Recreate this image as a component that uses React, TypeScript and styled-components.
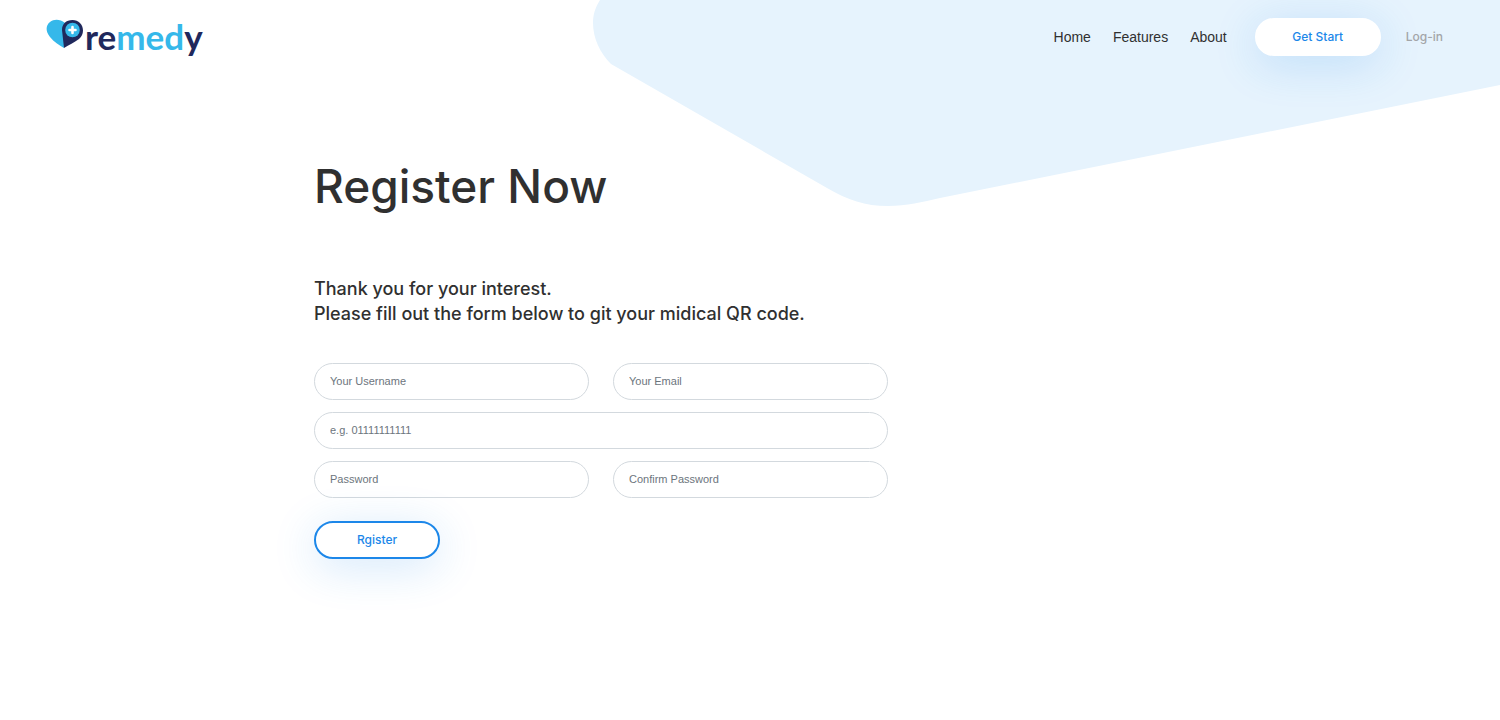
import React from "react";
import styled, { createGlobalStyle } from "styled-components";

const GlobalStyle = createGlobalStyle`
  *, *::before, *::after { box-sizing: border-box; }
  body {
    margin: 0;
    background: #fff;
    color: #303030;
    font-family: Inter, "Liberation Sans", sans-serif;
  }
`;

const Page = styled.div`
  position: relative;
  min-height: 100vh;
  overflow: hidden;
`;

const Backdrop = styled.svg`
  position: absolute;
  top: 0;
  right: 0;
  z-index: -1;
  width: 908px;
  height: 208px;
`;

const Header = styled.header`
  display: flex;
  align-items: center;
  justify-content: space-between;
  height: 74px;
  padding: 0 57px 0 46px;
`;

const Brand = styled.a`
  display: flex;
  align-items: flex-start;
  height: 36px;
  gap: 1px;
  text-decoration: none;
`;

const BrandMark = styled.svg`
  width: 38px;
  height: 30px;
`;

const BrandName = styled.span`
  color: #20285c;
  font: 700 35px/34px Lato, sans-serif;
`;

const BrandAccent = styled.span`
  color: #35b8ea;
`;

const Nav = styled.nav`
  display: flex;
  align-items: center;
`;

const NavLinks = styled.div`
  display: flex;
  gap: 22px;
  margin-right: 28px;
`;

const NavLink = styled.a`
  color: #303030;
  font: 400 14px/20px "Liberation Sans", sans-serif;
  text-decoration: none;
`;

const LoginLink = styled.a`
  margin-left: 25px;
  color: #a3a5a8;
  font: 500 12px/20px Inter, sans-serif;
  text-decoration: none;
`;

const PillButton = styled.button<{ $outlined?: boolean }>`
  width: 126px;
  height: 38px;
  padding: 0;
  border: 2px solid ${(p) => (p.$outlined ? "#1c87e9" : "#fff")};
  border-radius: 19px;
  background: #fff;
  box-shadow: 0 8px 45px rgba(28, 135, 233, 0.2);
  color: #1c87e9;
  font: 500 12px/20px Inter, sans-serif;
  cursor: pointer;
`;

const Main = styled.main`
  max-width: 912px;
  padding: 84px 24px 40px 314px;

  @media (max-width: 900px) {
    padding-left: 24px;
  }
`;

const Title = styled.h1`
  margin: 0;
  font-size: 46px;
  font-weight: 500;
  line-height: 56px;
`;

const Intro = styled.p`
  margin: 62px 0 37px;
  font-size: 18px;
  font-weight: 500;
  line-height: 25px;
`;

const Form = styled.form`
  display: grid;
  grid-template-columns: 1fr 1fr;
  gap: 12px 24px;
`;

const Field = styled.label<{ $wide?: boolean }>`
  grid-column: ${(p) => (p.$wide ? "1 / -1" : "auto")};
`;

const Input = styled.input`
  display: block;
  width: 100%;
  height: 37px;
  padding: 0 15px 2px;
  border: 1px solid #d3d9de;
  border-radius: 19px;
  background: #fff;
  color: #303030;
  font: 400 11px/16px "Liberation Sans", sans-serif;

  &::placeholder {
    color: #6c757d;
    opacity: 1;
  }
`;

const Actions = styled.div`
  grid-column: 1 / -1;
  margin-top: 11px;
`;

const links = ["Home", "Features", "About"];

const fields = [
  { name: "username", type: "text", hint: "Your Username" },
  { name: "email", type: "email", hint: "Your Email" },
  { name: "phone", type: "tel", hint: "e.g. 01111111111", label: "Phone", wide: true },
  { name: "password", type: "password", hint: "Password" },
  { name: "confirm", type: "password", hint: "Confirm Password" },
];

export default function App() {
  return (
    <Page>
      <GlobalStyle />
      <Backdrop viewBox="0 0 908 208" aria-hidden="true">
        <path
          d="M8 0C3 8 1 15 1 23C1 38 8 53 19 64L235 188C256 200 273 206 296 206C315 206 330 202 348 198L908 85V0Z"
          fill="#e6f3fd"
        />
      </Backdrop>
      <Header>
        <Brand href="#" aria-label="remedy">
          <BrandMark viewBox="0 0 38 30" aria-hidden="true">
            <path
              d="M18 29C13 26 8 23 4 18C-1 12 0 6 4 3C8 0 14 0 19 4Z"
              fill="#35b8ea"
            />
            <path
              d="M18 29L16 11C16 5 20 1 26.500 1C32.500 1 37 5.500 37 11.500C37 15 35.500 18 33 20C28 23.500 23 26 18 29Z"
              fill="#20285c"
            />
            <circle cx="26.500" cy="11" r="7.300" fill="#35b8ea" />
            <path d="M26.500 8V14M23.500 11H29.500" stroke="#fff" strokeWidth="2.600" strokeLinecap="round" />
          </BrandMark>
          <BrandName>
            re<BrandAccent>med</BrandAccent>y
          </BrandName>
        </Brand>
        <Nav>
          <NavLinks>
            {links.map((text) => (
              <NavLink key={text} href="#">
                {text}
              </NavLink>
            ))}
          </NavLinks>
          <PillButton type="button">Get Start</PillButton>
          <LoginLink href="#">Log-in</LoginLink>
        </Nav>
      </Header>
      <Main>
        <Title>Register Now</Title>
        <Intro>
          Thank you for your interest.
          <br />
          Please fill out the form below to git your midical QR code.
        </Intro>
        <Form onSubmit={(e) => e.preventDefault()}>
          {fields.map((f) => (
            <Field key={f.name} $wide={f.wide} htmlFor={f.name}>
              <Input
                id={f.name}
                name={f.name}
                type={f.type}
                placeholder={f.hint}
                aria-label={f.label ?? f.hint}
              />
            </Field>
          ))}
          <Actions>
            <PillButton type="submit" $outlined>
              Rgister
            </PillButton>
          </Actions>
        </Form>
      </Main>
    </Page>
  );
}
